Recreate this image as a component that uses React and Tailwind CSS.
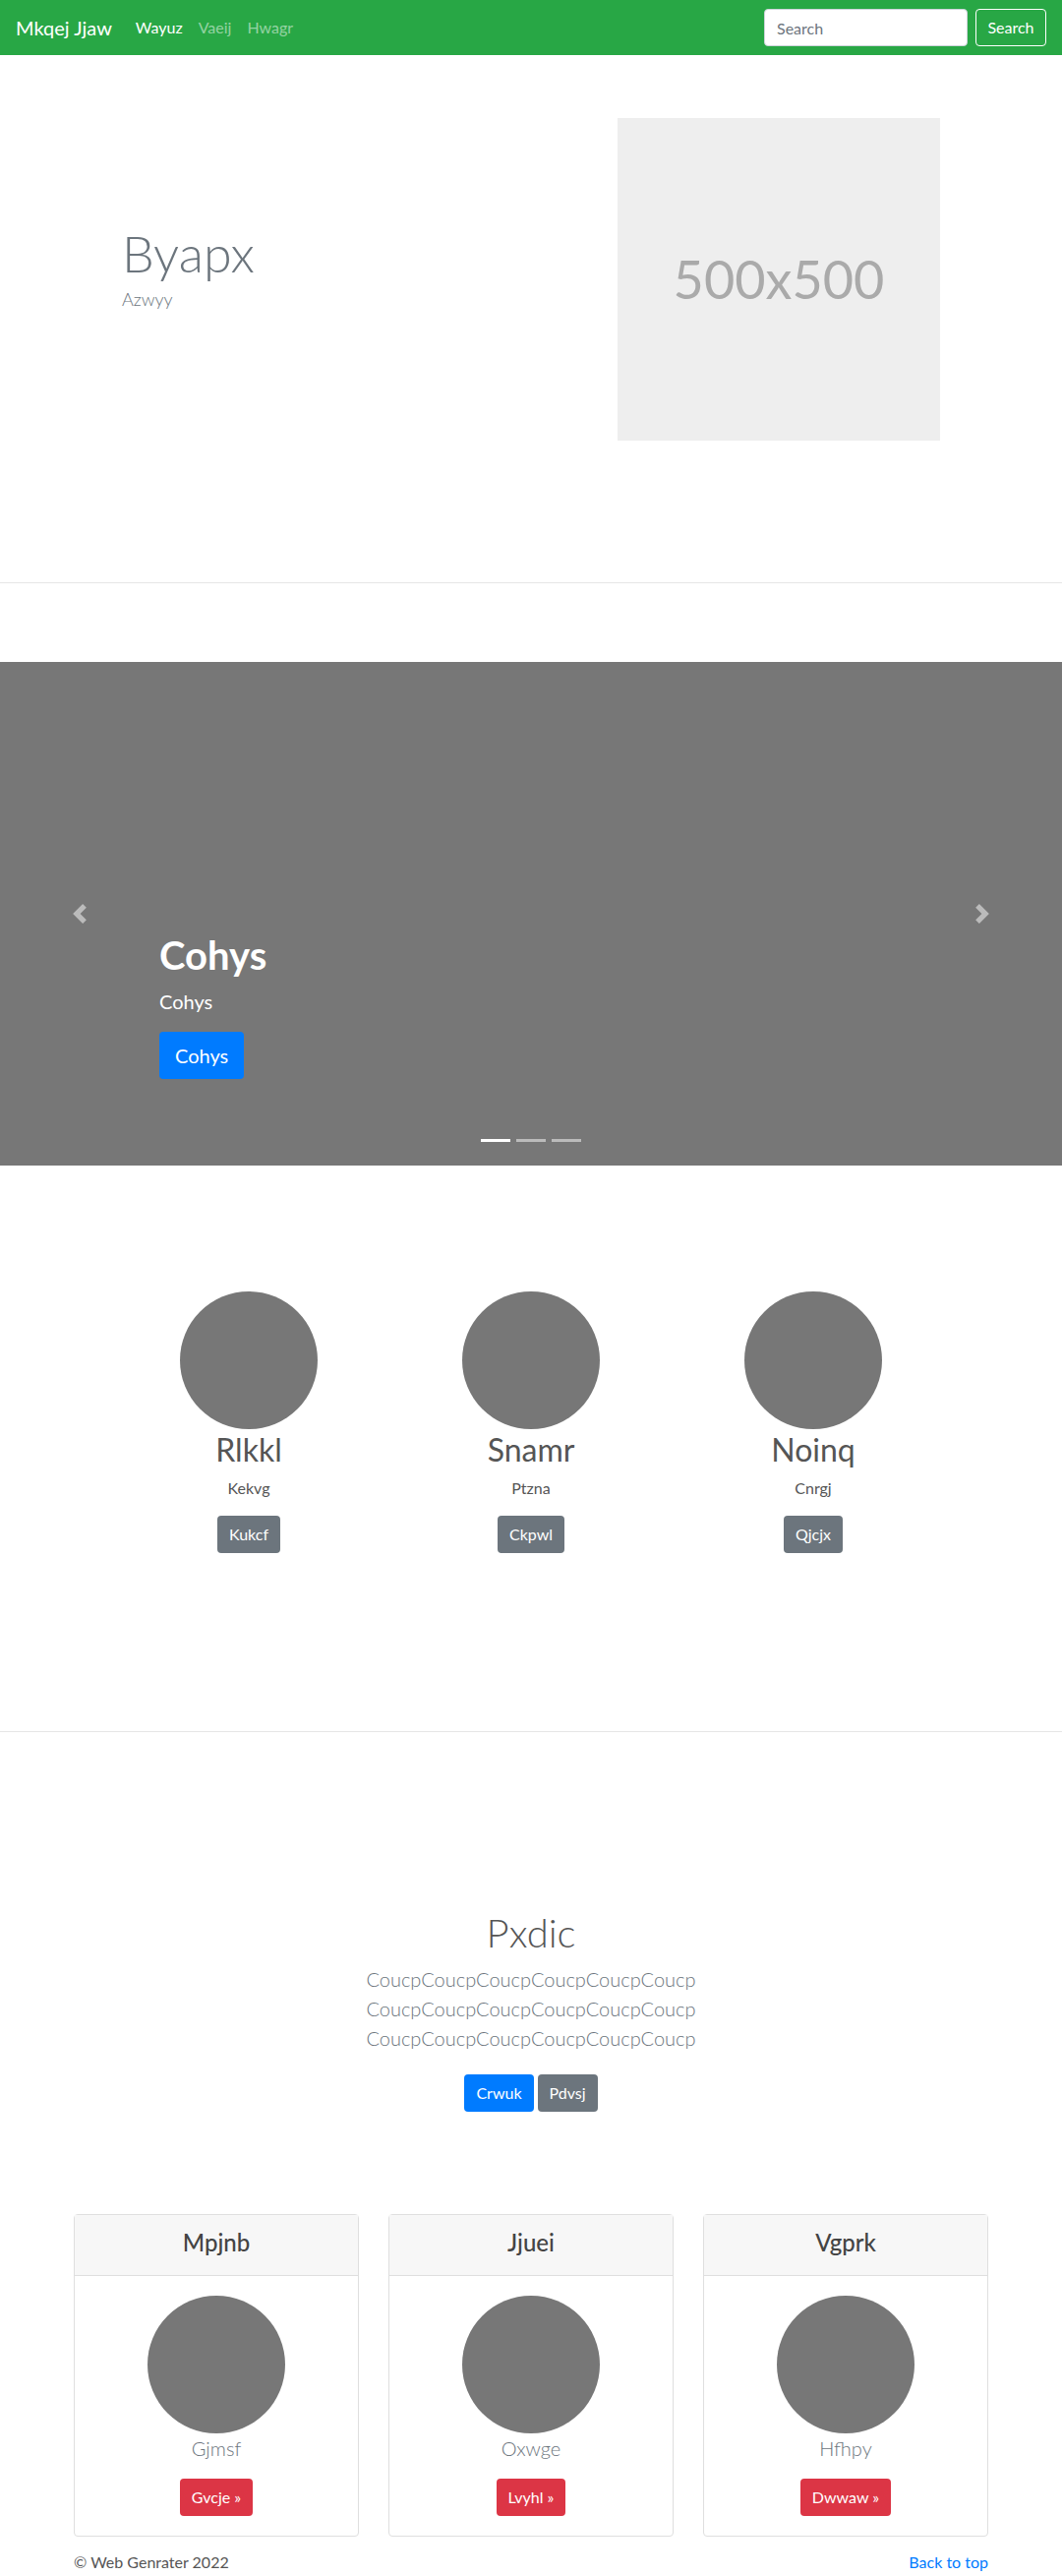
import React from 'react';

const font = { fontFamily: 'Lato, "Noto Sans", Arial, sans-serif' };

const team = [
  { name: 'Rlkkl', sub: 'Kekvg', btn: 'Kukcf' },
  { name: 'Snamr', sub: 'Ptzna', btn: 'Ckpwl' },
  { name: 'Noinq', sub: 'Cnrgj', btn: 'Qjcjx' },
];

const cards = [
  { title: 'Mpjnb', sub: 'Gjmsf', btn: 'Gvcje »' },
  { title: 'Jjuei', sub: 'Oxwge', btn: 'Lvyhl »' },
  { title: 'Vgprk', sub: 'Hfhpy', btn: 'Dwwaw »' },
];

function Chevron({ dir }) {
  // bootstrap carousel control icon
  const d = dir === 'left'
    ? 'M5.25 0l-4 4 4 4 1.5-1.5L4.25 4l2.5-2.5L5.25 0z'
    : 'M2.75 0l-1.5 1.5L3.75 4l-2.5 2.5L2.75 8l4-4-4-4z';
  return (
    <svg viewBox="0 0 8 8" className="w-5 h-5" fill="#fff">
      <path d={d} />
    </svg>
  );
}

export default function App() {
  return (
    <div className="bg-white text-[#555] text-base" style={font}>
      {/* navbar */}
      <nav className="h-14 bg-[#28a745] px-4 flex items-center">
        <span className="text-xl text-white mr-4 leading-[30px]">Mkqej Jjaw</span>
        <div className="flex items-center">
          <span className="px-2 text-white">Wayuz</span>
          <span className="px-2 text-white/50">Vaeij</span>
          <span className="px-2 text-white/50">Hwagr</span>
        </div>
        <div className="ml-auto flex items-center gap-2">
          <input
            type="text"
            placeholder="Search"
            className="w-[207px] h-[38px] px-3 rounded bg-white border border-[#ced4da] text-base placeholder:text-[#6c757d] outline-none"
          />
          <button className="h-[38px] w-[72px] rounded border border-white text-white">Search</button>
        </div>
      </nav>

      {/* hero */}
      <section className="pt-16 pb-[144px] flex border-b border-[#e6e6e6]">
        <div className="w-[628px] pl-[124px] pt-[106px]">
          <h1 className="text-[52px] font-light leading-[1.2] text-[#6c757d]">Byapx</h1>
          <p className="mt-[3px] text-[18px] font-light text-[#6c757d] leading-[1.5]">Azwyy</p>
        </div>
        <div className="w-[328px] h-[328px] bg-[#eeeeee] flex items-center justify-center">
          <span className="text-[54px] text-[#aaaaaa] leading-none">500x500</span>
        </div>
      </section>

      {/* carousel */}
      <section className="mt-20 relative h-[512px] bg-[#777777]">
        <div className="absolute left-0 top-0 h-full w-[15%] flex items-center justify-center opacity-50">
          <Chevron dir="left" />
        </div>
        <div className="absolute right-0 top-0 h-full w-[15%] flex items-center justify-center opacity-50">
          <Chevron dir="right" />
        </div>
        <div className="absolute left-[15%] bottom-[88px] text-white">
          <h2 className="text-[40px] font-bold leading-[1.2] mb-2">Cohys</h2>
          <p className="text-xl leading-[1.5] mb-4">Cohys</p>
          <button className="h-12 px-4 rounded bg-[#007bff] text-xl text-white">Cohys</button>
        </div>
        <div className="absolute bottom-6 left-0 right-0 flex justify-center gap-[6px]">
          <span className="w-[30px] h-[3px] bg-white" />
          <span className="w-[30px] h-[3px] bg-white/50" />
          <span className="w-[30px] h-[3px] bg-white/50" />
        </div>
      </section>

      {/* team */}
      <section className="pt-[128px] pb-[181px] border-b border-[#e6e6e6]">
        <div className="w-[861px] mx-auto grid grid-cols-3 text-center">
          {team.map((t) => (
            <div key={t.name} className="flex flex-col items-center">
              <div className="w-[140px] h-[140px] rounded-full bg-[#777777]" />
              <h2 className="text-[32px] leading-[1.2] text-[#555] mt-[2px] mb-2">{t.name}</h2>
              <p className="text-base leading-[1.5] mb-4">{t.sub}</p>
              <button className="h-[38px] px-3 rounded bg-[#6c757d] text-white text-base">{t.btn}</button>
            </div>
          ))}
        </div>
      </section>

      {/* intro */}
      <section className="pt-[180px] text-center">
        <h1 className="text-[40px] font-light leading-[1.2] mb-2 text-[#555]">Pxdic</h1>
        <p className="text-xl font-light leading-[1.5] text-[#6c757d] mb-[22px]">
          <span className="block">CoucpCoucpCoucpCoucpCoucpCoucp</span>
          <span className="block">CoucpCoucpCoucpCoucpCoucpCoucp</span>
          <span className="block">CoucpCoucpCoucpCoucpCoucpCoucp</span>
        </p>
        <div className="flex justify-center gap-1">
          <button className="h-[38px] px-3 rounded bg-[#007bff] text-white">Crwuk</button>
          <button className="h-[38px] px-3 rounded bg-[#6c757d] text-white">Pdvsj</button>
        </div>
      </section>

      {/* cards */}
      <section className="mt-[104px] w-[930px] mx-auto grid grid-cols-3 gap-[30px]">
        {cards.map((c) => (
          <div key={c.title} className="border border-[#dfdfdf] rounded text-center">
            <div className="bg-[#f7f7f7] border-b border-[#dfdfdf] pt-[14px] pb-[18px]">
              <h4 className="text-2xl font-medium leading-[1.2] text-[#444]">{c.title}</h4>
            </div>
            <div className="p-5 flex flex-col items-center">
              <div className="w-[140px] h-[140px] rounded-full bg-[#777777]" />
              <p className="text-xl font-light leading-[1.5] text-[#6c757d] mb-4">{c.sub}</p>
              <button className="h-[38px] px-3 rounded bg-[#dc3545] text-white">{c.btn}</button>
            </div>
          </div>
        ))}
      </section>

      {/* footer */}
      <footer className="w-[930px] mx-auto mt-[14px] flex justify-between leading-[1.5]">
        <span>© Web Genrater 2022</span>
        <span className="text-[#007bff]">Back to top</span>
      </footer>
    </div>
  );
}
